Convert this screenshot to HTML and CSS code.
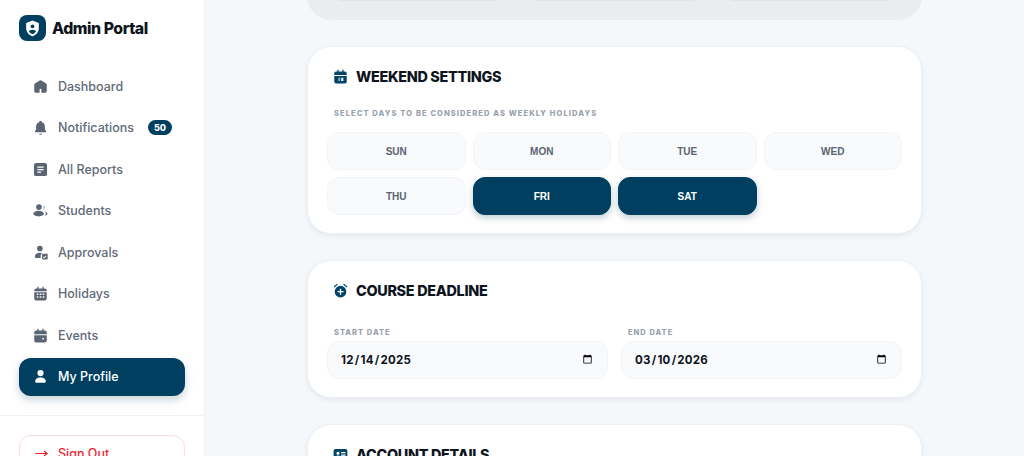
FILE: index.html
```html
<!DOCTYPE html>
<html lang="en">
<head>
  <meta charset="UTF-8" />
  <meta name="viewport" content="width=device-width, initial-scale=1" />
  <title>Admin Portal - My Profile</title>
  <link rel="stylesheet" href="styles.css">
</head>
<body>
  <aside class="sidebar">
    <div class="brand">
      <span class="brand-logo">
        <svg viewBox="0 0 24 24" width="19" height="19"><path fill="#fff" fill-rule="evenodd" d="M12 2 4 5v6.500c0 4.900 3.300 9 8 10.500 4.700-1.500 8-5.600 8-10.500V5zm0 4.800a2.500 2.500 0 1 1 0 5 2.500 2.500 0 0 1 0-5zm0 6.700c2.200 0 4 .9 4.500 2.200-1 1.500-2.600 2.700-4.500 3.300-1.900-.6-3.500-1.800-4.500-3.300.5-1.300 2.300-2.200 4.500-2.200z"/></svg>
      </span>
      <span class="brand-name">Admin Portal</span>
    </div>

    <nav class="nav">
      <a class="nav-item" href="#">
        <svg class="nav-icon" viewBox="0 0 24 24"><path fill-rule="evenodd" d="M10.700 2.200 3.500 6.600A3 3 0 0 0 2 9.200V19a3 3 0 0 0 3 3h14a3 3 0 0 0 3-3V9.200a3 3 0 0 0-1.500-2.600l-7.200-4.400a2.500 2.500 0 0 0-2.600 0zM10.500 17a1.500 1.500 0 0 1 3 0v5h-3z"/></svg>
        Dashboard
      </a>
      <a class="nav-item" href="#">
        <svg class="nav-icon" viewBox="0 0 24 24"><path d="M12 23.500c1.300 0 2.300-.7 2.300-1.700H9.700c0 1 1 1.700 2.300 1.700zm7-8.500v-4.500c0-3.400-1.800-6-5-6.800V3a2 2 0 0 0-4 0v.7c-3.200.8-5 3.400-5 6.800V15l-1.700 2.300c-.6.800-.2 2.200.7 2.200h16c.9 0 1.300-1.400.7-2.200z"/></svg>
        Notifications
        <span class="badge">50</span>
      </a>
      <a class="nav-item" href="#">
        <svg class="nav-icon" viewBox="0 0 24 24"><path fill-rule="evenodd" d="M5 1.500h14A3.500 3.500 0 0 1 22.500 5v14a3.500 3.500 0 0 1-3.500 3.500H5A3.500 3.500 0 0 1 1.500 19V5A3.500 3.500 0 0 1 5 1.500zM7 7v2h10V7zm0 4v2h10v-2zm0 4v2h6v-2z"/></svg>
        All Reports
      </a>
      <a class="nav-item" href="#">
        <svg class="nav-icon" viewBox="0 0 24 24"><circle cx="9.500" cy="6.500" r="4.500"/><ellipse cx="9" cy="17" rx="8.500" ry="4.500"/><path d="M16 3a4 4 0 0 1 0 7.500c1-1 1.500-2.300 1.500-3.800S17 4 16 3zM19 13.500c2.500.8 4 2 4 3.500s-1.500 2.700-4 3.500c1-1 1.500-2.200 1.500-3.500S20 14.500 19 13.500z"/></svg>
        Students
      </a>
      <a class="nav-item" href="#">
        <svg class="nav-icon" viewBox="0 0 24 24"><circle cx="11" cy="5.500" r="4.500"/><path d="M3 19c0-4 3.500-6.500 8-6.500 1.500 0 2.800.3 4 .8-1.800.9-3 2.500-3 4.700 0 1 .3 2 .8 2.800H5a2 2 0 0 1-2-1.800z"/><path fill-rule="evenodd" d="M16 14h6a1.500 1.500 0 0 1 1.500 1.500v6A1.500 1.500 0 0 1 22 23h-6a1.500 1.500 0 0 1-1.500-1.500v-6A1.500 1.500 0 0 1 16 14zm.6 4.200-.9.900 2.300 2.300 3.500-3.600-.9-.9-2.600 2.700z"/></svg>
        Approvals
      </a>
      <a class="nav-item" href="#">
        <svg class="nav-icon" viewBox="0 0 24 24"><path fill-rule="evenodd" d="M7 1h2v3h6V1h2v3h2a3 3 0 0 1 3 3v13a3 3 0 0 1-3 3H5a3 3 0 0 1-3-3V7a3 3 0 0 1 3-3h2zM2 8.500V10h20V8.500zM6 12v2.200h2.500V12zm4.700 0v2.200h2.600V12zm4.800 0v2.200H18V12zM6 16.500v2.200h2.500v-2.200zm4.700 0v2.200h2.600v-2.200zm4.800 0v2.200H18v-2.200z"/></svg>
        Holidays
      </a>
      <a class="nav-item" href="#">
        <svg class="nav-icon" viewBox="0 0 24 24"><path fill-rule="evenodd" d="M7 1h2v3h6V1h2v3h2a3 3 0 0 1 3 3v3H2V7a3 3 0 0 1 3-3h2zM2 11.500h20V20a3 3 0 0 1-3 3H5a3 3 0 0 1-3-3zm13 4.500v2.500h2.500V16z"/></svg>
        Events
      </a>
      <a class="nav-item active" href="#">
        <svg class="nav-icon" viewBox="0 0 24 24"><circle cx="12" cy="6.500" r="5"/><path d="M3.500 19.500c0-3.800 3.800-6 8.500-6s8.500 2.200 8.500 6a2.500 2.500 0 0 1-2.500 2.500H6a2.500 2.500 0 0 1-2.500-2.500z"/></svg>
        My Profile
      </a>
    </nav>

    <div class="sidebar-foot">
      <button class="signout" type="button">
        <svg viewBox="0 0 24 24" width="15" height="15"><path fill="none" stroke="#f01f2e" stroke-width="1.800" d="M2 12h19M16 8l5 4-5 4"/></svg>
        Sign Out
      </button>
    </div>
  </aside>

  <main class="main">
    <section class="card card-muted">
      <div class="muted-row">
        <span></span>
        <span></span>
        <span></span>
      </div>
    </section>

    <section class="card">
      <h2 class="card-title">
        <svg class="title-icon" viewBox="0 0 24 24"><path fill-rule="evenodd" d="M7 1h2v3h6V1h2v3h2a3 3 0 0 1 3 3v2.500H2V7a3 3 0 0 1 3-3h2zM2 11h20v9a3 3 0 0 1-3 3H5a3 3 0 0 1-3-3zm7 3v5h1.500v-5zm3 0v1.300h2.500V16H13v3h3.500v-5z"/></svg>
        WEEKEND SETTINGS
      </h2>
      <p class="hint">SELECT DAYS TO BE CONSIDERED AS WEEKLY HOLIDAYS</p>
      <div class="days">
        <button class="day" type="button">SUN</button>
        <button class="day" type="button">MON</button>
        <button class="day" type="button">TUE</button>
        <button class="day" type="button">WED</button>
        <button class="day" type="button">THU</button>
        <button class="day on" type="button">FRI</button>
        <button class="day on" type="button">SAT</button>
      </div>
    </section>

    <section class="card">
      <h2 class="card-title">
        <svg class="title-icon" viewBox="0 0 24 24"><path fill-rule="evenodd" d="M12 4.500a9.300 9.300 0 1 1 0 18.600 9.300 9.300 0 0 1 0-18.600zM11 9v3.800H7.200v2H11v3.800h2v-3.800h3.800v-2H13V9z"/><path d="M6.500 1 1 5.500l1.300 1.500 5.500-4.500zM17.500 1 23 5.500 21.700 7l-5.500-4.500z"/></svg>
        COURSE DEADLINE
      </h2>
      <div class="dates">
        <label class="field">
          <span class="field-label">START DATE</span>
          <input class="date" type="date" value="2025-12-14">
        </label>
        <label class="field">
          <span class="field-label">END DATE</span>
          <input class="date" type="date" value="2026-03-10">
        </label>
      </div>
    </section>

    <section class="card">
      <h2 class="card-title">
        <svg class="title-icon" viewBox="0 0 24 24"><path fill-rule="evenodd" d="M4 3h16a3 3 0 0 1 3 3v12a3 3 0 0 1-3 3H4a3 3 0 0 1-3-3V6a3 3 0 0 1 3-3zm4 4.500a2.500 2.500 0 1 0 0 5 2.500 2.500 0 0 0 0-5zM13 8v2h7V8zm0 4v2h7v-2zM3.500 17h9c0-2-2-3.500-4.500-3.500S3.500 15 3.500 17z"/></svg>
        ACCOUNT DETAILS
      </h2>
    </section>
  </main>
</body>
</html>
```

FILE: styles.css
```css
* { box-sizing: border-box; }
html, body {
  height: 100%;
}
body {
  margin: 0;
  height: 100vh;
  overflow: hidden;
  display: flex;
  font-family: Inter, "Liberation Sans", sans-serif;
  background: #f5f8fb;
  color: #0f172a;
}
.sidebar {
  width: 205px;
  flex-shrink: 0;
  background: #fff;
  border-right: 1px solid #f0f3f6;
  display: flex;
  flex-direction: column;
}
.brand {
  display: flex;
  align-items: center;
  gap: 6px;
  padding: 15px 19px 0;
}
.brand-logo {
  width: 27px;
  height: 26px;
  border-radius: 8px;
  background: #003f5f;
  display: flex;
  align-items: center;
  justify-content: center;
}
.brand-name {
  font-size: 15.8px;
  font-weight: 800;
  letter-spacing: -0.45px;
  color: #0d1420;
}
.nav {
  display: flex;
  flex-direction: column;
  gap: 3.5px;
  padding: 26px 19px 0;
}
.nav-item {
  height: 38px;
  display: flex;
  align-items: center;
  gap: 10px;
  padding: 0 14px;
  border-radius: 12px;
  font-size: 12.5px;
  font-weight: 500;
  color: #616a77;
  text-decoration: none;
}
.nav-icon {
  width: 15px;
  height: 15px;
  flex-shrink: 0;
  fill: #5a6472;
}
.nav-item.active {
  background: #003f5f;
  color: #fff;
  box-shadow: 0 4px 8px rgba(0, 63, 95, 0.22);
}
.nav-item.active .nav-icon {
  fill: #fff;
}
.badge {
  margin-left: auto;
  margin-right: -1px;
  width: 24px;
  height: 15px;
  border-radius: 8px;
  background: #003f5f;
  color: #fff;
  font-size: 9px;
  font-weight: 800;
  line-height: 15px;
  text-align: center;
}
.sidebar-foot {
  margin-top: 19px;
  border-top: 1px solid #f0f3f6;
  padding: 19px 19px 0;
}
.signout {
  width: 100%;
  height: 38px;
  display: flex;
  align-items: center;
  gap: 9px;
  padding: 0 14px;
  border: 1px solid #fddcdc;
  border-radius: 12px;
  background: #fff;
  color: #f01f2e;
  font-family: inherit;
  font-size: 12.5px;
  font-weight: 500;
}
.main {
  flex: 1;
  min-width: 0;
  padding: 0 102px;
  display: flex;
  flex-direction: column;
  gap: 26px;
  margin-top: -40px;
}
.card {
  flex-shrink: 0;
  background: #fff;
  border: 1px solid #eef1f4;
  border-radius: 24px;
  box-shadow: 0 2px 5px rgba(15, 23, 42, 0.07);
  padding: 19px 19px 18px;
}
.card-muted {
  height: 60px;
  background: #e9edf0;
  border-color: #e9edf0;
  box-shadow: none;
  padding: 0 19px;
}
.muted-row {
  display: grid;
  grid-template-columns: repeat(3, 1fr);
  gap: 13px;
}
.muted-row span {
  height: 40px;
  border-radius: 16px;
  background: #eef1f4;
  border-bottom: 1px solid #dfe4e8;
}
.card-title {
  display: flex;
  align-items: center;
  gap: 8px;
  margin: 0 0 0 6px;
  height: 20px;
  font-size: 14.4px;
  font-weight: 800;
  letter-spacing: -0.3px;
  color: #0d1420;
}
.title-icon {
  width: 15px;
  height: 15px;
  fill: #004468;
  flex-shrink: 0;
}
.hint {
  margin: 23px 0 13px 7px;
  font-size: 7.500px;
  line-height: 10px;
  font-weight: 800;
  letter-spacing: 1.1px;
  color: #98a1ac;
}
.days {
  display: grid;
  grid-template-columns: repeat(4, 1fr);
  gap: 7px;
}
.day {
  height: 38px;
  border: 1px solid #f3f5f8;
  border-radius: 12px;
  background: #f9fafc;
  color: #5a6472;
  font-family: "Liberation Sans", Arial, sans-serif;
  font-size: 10px;
  font-weight: 700;
}
.day.on {
  background: #003f5f;
  border-color: #003f5f;
  color: #fff;
  box-shadow: 0 3px 7px rgba(0, 63, 95, 0.25);
}
.dates {
  display: grid;
  grid-template-columns: 1fr 1fr;
  gap: 13px;
  margin-top: 28px;
}
.field {
  display: flex;
  flex-direction: column;
}
.field-label {
  margin: 0 0 3px 7px;
  font-size: 7.500px;
  line-height: 10px;
  font-weight: 800;
  letter-spacing: 1px;
  color: #98a1ac;
}
.date {
  height: 38px;
  width: 100%;
  padding: 0 12px;
  border: 1px solid #f3f5f8;
  border-radius: 12px;
  background: #f9fafc;
  color: #0d1420;
  font-family: Inter, "Liberation Sans", sans-serif;
  font-size: 11.5px;
  font-weight: 700;
  letter-spacing: 0.25px;
}
```
